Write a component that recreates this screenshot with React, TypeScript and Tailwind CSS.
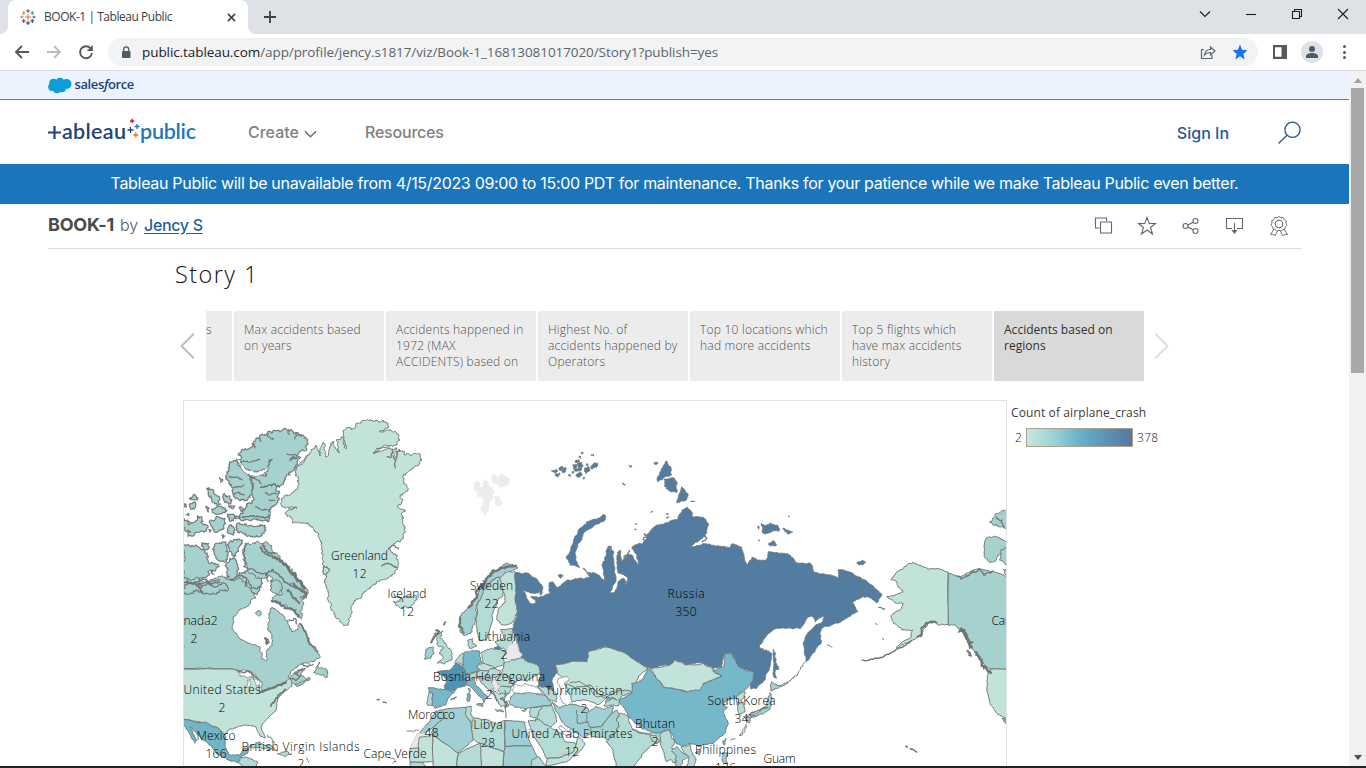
import React from "react";

type Tile = "P" | "A" | "B" | "C" | "D" | "E" | "F" | "G";
// [fill, tile, coast roughness, points]
type Region = [string, Tile, number, string];
type Pt = [number, number];

// Survey sheets: each has its own origin and a three-to-one scale; P is plain map space.
const tiles: Record<Tile, [number, number, number]> = {
  P: [0, 0, 1],
  A: [180, 400, 3],
  B: [180, 580, 3],
  C: [380, 440, 3],
  D: [380, 590, 3],
  E: [540, 440, 3],
  F: [570, 600, 3],
  G: [730, 500, 3],
};

const MINT = "#c1e3da";
const PALE = "#b3dcd6";
const CANADA = "#a5d1ce";
const AQUA = "#a0d0d3";
const SKY = "#74b8c9";
const RUSSIA = "#527da0";
const GRAY = "#e9e9e9";

function noise(a: Pt, b: Pt) {
  const v = Math.sin((a[0] + b[0]) * 12.9898 + (a[1] + b[1]) * 78.233) * 43758.5453;
  return (v - Math.floor(v)) * 2 - 1;
}

function split(a: Pt, b: Pt, amp: number, depth: number, out: Pt[]) {
  const dx = b[0] - a[0];
  const dy = b[1] - a[1];
  const len = Math.hypot(dx, dy);
  if (depth === 0 || len < 1.6 || amp === 0) {
    out.push(b);
    return;
  }
  const sign = a[0] < b[0] || (a[0] === b[0] && a[1] < b[1]) ? 1 : -1;
  const k = noise(a, b) * Math.min(amp, len * 0.5) * sign;
  const m: Pt = [(a[0] + b[0]) / 2 - (dy / len) * k, (a[1] + b[1]) / 2 + (dx / len) * k];
  split(a, m, amp * 0.85, depth - 1, out);
  split(m, b, amp * 0.85, depth - 1, out);
}

function toPath(tile: Tile, amp: number, src: string, closed = true) {
  const [ox, oy, s] = tiles[tile];
  const pts = src.split(" ").map((p) => {
    const [x, y] = p.split(",").map(Number);
    return [ox + x / s, oy + y / s] as Pt;
  });
  const depth = amp > 1 ? 4 : 3;
  const out: Pt[] = [pts[0]];
  for (let i = 1; i < pts.length; i++) split(pts[i - 1], pts[i], amp, depth, out);
  if (closed) split(pts[pts.length - 1], pts[0], amp, depth, out);
  return "M" + out.map((p) => p[0].toFixed(1) + " " + p[1].toFixed(1)).join("L") + (closed ? "Z" : "");
}

const regions: Region[] = [
  // Greenland
  [MINT, "P", 1.5, "308,455 313,449 317,446 320,456 322,445 324,443 326,457 330,448 333,441 339,453 336,440 341,437 346,449 343,432 350,428 356,427 361,422 370,420 378,421 386,422 389,427 379,431 389,430 396,432 400,440 393,446 380,448 374,454 384,450 397,448 394,460 399,449 405,455 412,455 415,453 420,455 422,460 410,470 403,475 404,482 408,490 400,495 402,503 398,507 405,510 402,515 403,522 405,528 403,537 397,542 390,550 397,555 398,568 395,573 388,578 383,580 373,585 362,597 353,603 352,613 348,625 342,623 335,617 330,607 328,597 326,587 325,580 327,577 323,567 322,550 318,533 308,523 293,523 285,513 297,508 283,507 282,498 290,495 298,488 298,478 295,475 297,467 305,460"],
  [MINT, "A", 1, "430,503 440,500 448,512 438,524 430,518"],
  // Arctic Canada
  [CANADA, "A", 2.4, "175,165 190,150 220,130 250,105 280,92 320,90 350,98 375,115 385,130 380,150 330,182 362,172 345,200 330,225 305,255 290,262 295,285 290,310 265,330 270,355 250,362 200,358 165,352 190,340 200,320 210,308 218,290 216,268 212,246 205,230 225,228 245,226 265,208 240,218 215,220 190,208"],
  [CANADA, "A", 2, "160,182 172,182 190,210 205,226 214,245 216,275 198,302 180,302 160,285 155,262 142,240 145,210 150,185"],
  [CANADA, "A", 1, "118,233 128,238 122,248"],
  [CANADA, "A", 1.7, "80,265 100,270 118,290 122,313 110,312 95,298 85,285"],
  [CANADA, "A", 1.4, "130,282 145,288 155,305 146,313 135,308"],
  [CANADA, "A", 1.2, "28,296 44,284 54,296 40,299"],
  [CANADA, "A", 1.2, "28,312 46,306 47,322 36,328"],
  [CANADA, "A", 1, "12,310 18,312 16,322 12,320"],
  [CANADA, "A", 1, "18,345 26,340 28,346"],
  [CANADA, "A", 1, "78,318 87,326 85,336"],
  [CANADA, "A", 1, "145,318 165,318 160,326"],
  [CANADA, "A", 1, "178,322 190,325 184,335"],
  [CANADA, "A", 1.4, "95,327 115,318 140,330 126,342 100,338"],
  [CANADA, "A", 2, "12,355 24,372 45,365 52,348 65,350 64,368 80,375 75,395 48,398 40,408 22,408 32,395 12,388"],
  [CANADA, "A", 1.8, "92,360 115,350 135,355 132,385 112,397 98,385"],
  [CANADA, "A", 1.4, "142,342 163,345 160,362 148,360"],
  [CANADA, "A", 1.4, "147,375 160,380 160,405 146,400"],
  [CANADA, "A", 1.8, "172,370 200,378 255,375 258,392 240,410 200,408 178,398"],
  [CANADA, "A", 1, "86,388 94,390 88,396"],
  [CANADA, "A", 1, "125,405 135,408 128,416"],
  [CANADA, "A", 1.8, "110,430 138,425 138,455 142,478 118,482 102,455"],
  [CANADA, "A", 1.5, "150,425 187,420 175,450 163,472 150,455"],
  [CANADA, "A", 1.4, "65,430 86,430 85,446 70,448"],
  [CANADA, "A", 2, "12,435 55,440 76,455 84,480 105,490 117,500 95,510 102,522 85,518 70,532 40,540 12,530"],
  [CANADA, "A", 2, "150,474 162,476 172,500 170,522 188,518 212,512 235,520 245,545 235,575 200,568 150,572 140,550 148,530 140,505"],
  [CANADA, "A", 1.5, "278,540 292,545 288,562 275,560"],
  [CANADA, "P", 2.2, "245,543 255,544 263,543 272,546 273,552 280,558 287,565 293,572 300,582 308,590 307,598 300,597 302,607 302,618 292,610 285,605 275,602 272,598 282,595 281,585 272,577 262,578 255,575 248,570 243,560 242,550"],
  // Canada, mainland
  [CANADA, "P", 1.1, "183,578 190,580 197,577 205,583 215,578 225,577 232,581 239,577 244,582 250,588 256,598 251,600 250,604 240,610 233,618 232,628 238,637 248,643 260,647 262,658 267,660 267,650 272,645 272,635 268,630 269,613 272,607 280,613 288,622 292,632 297,630 300,623 307,635 308,642 318,652 320,658 313,662 303,663 295,668 288,677 295,672 305,668 300,675 308,679 297,685 292,683 287,682 280,687 270,690 260,694 262,682 255,675 240,671 232,669 183,669"],
  [CANADA, "A", 2, "12,555 35,548 50,560 80,552 105,560 125,548 145,570 110,578 60,576 12,580"],
  [CANADA, "B", 1.4, "400,278 408,262 420,248 415,264 440,268 443,290 425,286"],
  [CANADA, "B", 1.2, "345,312 365,305 385,292 392,297 372,310 352,320"],
  [CANADA, "B", 1.6, "270,5 295,0 305,25 290,45 275,35"],
  [CANADA, "B", 1, "228,97 240,93 243,103 233,106"],
  // United States, Mexico, Caribbean
  [MINT, "P", 0.5, "183,669 232,669 245,672 258,682 260,693 272,688 285,683 290,678 292,686 285,691 278,698 276,710 268,718 262,725 261,728 265,738 260,736 256,727 245,725 235,728 228,730 225,735 218,728 208,725 195,721 183,719"],
  ["#71b5c7", "B", 0.7, "12,418 60,428 75,425 95,440 115,445 138,470 135,500 150,525 180,525 190,505 205,503 203,520 180,535 175,548 150,542 110,522 85,490 70,480 45,455 30,440 50,482 45,490 25,455 12,435"],
  [PALE, "B", 0.8, "175,545 185,530 210,535 232,545 232,562 190,562"],
  [PALE, "B", 1, "205,498 235,486 265,495 292,512 260,505 225,503"],
  [PALE, "B", 1, "292,520 318,513 335,522 318,528"],
  // Iceland, British Isles
  [MINT, "D", 1.4, "40,35 60,30 70,20 105,15 110,30 90,50 68,54 50,47"],
  [PALE, "D", 1.2, "165,128 188,124 182,145 200,165 215,188 212,212 192,222 172,220 188,205 180,185 190,172 172,165"],
  [AQUA, "D", 1, "138,178 158,170 162,188 152,205 134,208"],
  // Scandinavia
  [AQUA, "P", 1.2, "460,617 470,605 480,590 487,577 497,570 507,563 518,568 508,573 505,578 498,577 490,583 483,595 477,605 475,620 471,633 463,635 459,627"],
  [PALE, "P", 0.8, "490,583 498,577 503,585 503,595 498,600 493,612 492,622 486,640 479,640 476,625 477,605 483,593"],
  [MINT, "P", 0.8, "505,572 515,572 517,590 519,610 512,623 502,625 497,620 498,610 505,602 503,590 500,578"],
  // Russia
  [RUSSIA, "P", 0.9, "515,573 527,573 535,578 542,585 540,592 532,593 523,590 528,600 533,605 537,603 531,596 540,597 550,594 549,583 553,582 557,588 567,580 580,578 590,577 583,568 587,572 595,573 605,582 602,565 605,557 608,548 614,552 614,563 616,580 610,592 615,592 618,582 624,578 626,585 627,577 618,573 617,557 620,550 622,562 627,555 632,555 638,565 637,555 632,547 643,543 647,535 653,528 665,523 678,519 682,510 687,507 692,512 693,517 703,517 708,523 707,532 700,540 690,548 700,545 710,544 722,547 730,548 732,544 742,547 744,557 747,565 752,557 757,560 767,560 768,552 780,553 790,555 797,563 810,563 814,572 830,575 838,578 838,570 850,572 860,577 872,585 882,595 877,603 870,598 862,597 853,602 858,612 847,618 837,623 823,627 820,633 821,643 815,650 810,658 806,662 804,647 805,637 813,628 822,622 824,615 815,622 813,617 807,618 801,628 790,628 775,629 763,640 758,647 763,650 772,653 770,667 765,680 757,688 751,689 750,683 755,672 738,667 733,655 725,653 722,667 713,668 703,663 687,665 675,660 670,665 650,668 637,662 623,652 607,647 588,652 587,662 570,662 555,665 557,673 552,680 553,697 547,693 538,687 540,675 537,668 522,658 518,645 512,630 517,617 515,600"],
  [RUSSIA, "E", 0.8, "190,222 198,230 195,240 160,258 135,275 115,310 105,340 110,365 120,382 90,376 78,352 90,335 100,300 115,270 140,245 170,238"],
  [RUSSIA, "E", 0.9, "378,63 393,85 395,105 370,115 352,125 352,112 360,95"],
  [RUSSIA, "E", 0.9, "372,117 400,113 410,125 410,158 388,152 372,137"],
  [RUSSIA, "E", 0.8, "425,140 445,165 440,180 410,188"],
  [RUSSIA, "E", 0.6, "342,68 352,66 352,72 345,73"],
  [RUSSIA, "E", 0.6, "266,77 276,77 272,83"],
  [RUSSIA, "E", 0.6, "246,130 256,134 252,136"],
  [RUSSIA, "E", 0.8, "34,92 50,88 52,96 40,96"],
  [RUSSIA, "E", 0.8, "56,84 66,78 70,86 60,92"],
  [RUSSIA, "E", 0.8, "46,102 58,98 54,111 48,108"],
  [RUSSIA, "E", 0.8, "64,92 76,82 77,94 68,99"],
  [RUSSIA, "E", 0.8, "98,76 108,72 110,84 100,86"],
  [RUSSIA, "E", 0.8, "106,62 116,58 118,66 108,68"],
  [RUSSIA, "E", 0.8, "116,50 123,50 122,56"],
  [RUSSIA, "E", 0.8, "112,70 126,68 128,80 114,82"],
  [RUSSIA, "E", 0.8, "96,96 101,94 100,100"],
  [RUSSIA, "E", 0.8, "102,86 124,84 122,92 106,94"],
  [RUSSIA, "E", 0.8, "108,104 122,96 126,106 114,112"],
  [RUSSIA, "E", 0.8, "132,86 146,80 150,92 138,101"],
  [RUSSIA, "E", 0.6, "138,73 145,73 142,79"],
  [RUSSIA, "E", 0.6, "129,113 135,114 131,118"],
  [RUSSIA, "E", 0.8, "152,84 165,68 173,70 170,82 158,86"],
  [RUSSIA, "E", 0.6, "84,104 92,104 90,110"],
  [RUSSIA, "E", 0.6, "122,38 130,38 128,42"],
  [RUSSIA, "E", 0.6, "152,44 162,44 160,48"],
  [RUSSIA, "E", 0.6, "54,408 62,402 70,408 62,415"],
  [RUSSIA, "E", 0.8, "0,432 8,440 6,460 0,465"],
  [RUSSIA, "E", 0.7, "204,318 214,318 214,326 206,326"],
  [RUSSIA, "G", 1, "95,70 105,78 120,68 145,78 148,92 120,98 105,103 97,92"],
  [RUSSIA, "G", 0.8, "158,85 172,90 188,95 172,102 164,94"],
  [RUSSIA, "G", 0.8, "115,132 128,122 140,136 122,138"],
  [RUSSIA, "G", 0.8, "84,78 88,80 86,88"],
  [RUSSIA, "G", 0.8, "380,188 398,180 406,187 400,193 384,193"],
  [RUSSIA, "G", 0.7, "130,448 136,458 138,488 146,508 136,510 135,525 140,535 131,530 132,490"],
  // Europe
  [PALE, "D", 0.8, "362,118 395,115 398,135 405,150 395,165 380,180 355,168 345,155 370,145"],
  [RUSSIA, "D", 0.4, "343,172 356,168 364,179 345,180"],
  [GRAY, "D", 0.8, "385,165 410,160 415,182 427,192 415,208 378,208 378,190"],
  [PALE, "D", 0.8, "302,190 335,175 365,180 378,188 370,205 372,222 345,235 310,220"],
  [SKY, "D", 0.8, "250,190 275,182 300,185 305,220 290,228 298,245 255,250 248,225"],
  [PALE, "D", 0.8, "262,152 278,145 280,162 290,168 268,175"],
  [PALE, "D", 0.8, "232,205 250,190 250,225 235,218 225,222"],
  ["#4e94b5", "D", 0.8, "172,245 210,240 230,220 255,240 262,260 255,288 235,292 222,302 195,298 200,270"],
  [SKY, "D", 0.7, "145,293 195,298 225,305 205,325 195,345 165,355 156,345 158,310 148,305"],
  [PALE, "D", 0.6, "147,306 158,310 155,347 142,345"],
  [SKY, "D", 0.7, "258,272 285,265 285,282 312,312 322,318 312,338 302,320 275,292 260,285"],
  [SKY, "D", 0.6, "290,342 310,340 307,350"],
  [SKY, "D", 0.6, "262,312 271,312 269,333 261,332"],
  [PALE, "D", 0.6, "264,296 270,296 268,308"],
  [MINT, "D", 0.8, "290,228 310,220 330,226 345,235 325,242 300,242"],
  [PALE, "D", 0.8, "262,258 300,242 325,242 320,256 290,264 268,268"],
  [PALE, "D", 0.8, "325,242 345,235 362,242 350,262 330,265 318,256"],
  [PALE, "D", 0.8, "372,218 400,210 430,205 452,218 478,230 478,252 440,275 415,265 400,285 388,262 362,252"],
  [PALE, "D", 0.8, "350,258 375,252 400,285 393,292 360,290 342,272"],
  [PALE, "D", 0.7, "360,290 393,292 388,310 362,312 355,300"],
  [PALE, "D", 0.8, "295,265 330,265 338,282 340,305 325,298 305,280"],
  [GRAY, "D", 0.7, "335,268 345,270 360,288 350,302 340,292"],
  [MINT, "D", 1, "338,305 362,312 385,312 368,322 375,335 388,345 368,348 355,340"],
  [PALE, "D", 0.7, "345,358 362,360 372,365 355,364"],
  [AQUA, "D", 0.8, "390,322 412,310 450,308 500,318 515,345 470,350 440,356 405,352 388,340"],
  [PALE, "D", 0.6, "425,362 440,357 435,364"],
  [PALE, "D", 0.8, "470,288 500,292 530,312 530,335 510,330 495,315"],
  // Asia
  [MINT, "P", 0.7, "555,665 570,662 587,662 588,652 607,647 623,652 637,662 648,668 640,675 633,685 632,692 620,690 607,697 600,695 590,685 575,688 562,683 565,678 557,673"],
  [MINT, "P", 0.7, "566,684 575,688 590,685 600,695 607,697 598,705 585,700 572,702 570,695"],
  [PALE, "P", 0.7, "607,697 620,690 632,692 622,696 618,706 604,706"],
  [AQUA, "P", 0.7, "552,702 560,708 572,704 588,708 590,722 592,733 585,738 572,730 562,722"],
  [AQUA, "F", 0.8, "50,340 75,322 100,328 130,320 120,345 95,378 60,382 50,365"],
  [CANADA, "F", 0.8, "60,382 95,378 120,345 140,330 150,342 140,360 148,380 135,400 130,415 110,420 95,410 65,410"],
  [PALE, "F", 0.8, "150,340 170,345 180,372 190,388 235,402 270,395 280,405 272,425 255,430 215,465 190,502 140,502 130,450 108,425 135,400 148,380 140,360"],
  [PALE, "F", 0.7, "240,405 258,405 268,422 262,430 246,425"],
  [SKY, "F", 0.8, "145,300 185,280 185,250 215,240 235,205 260,235 280,260 350,275 400,250 455,228 430,210 460,200 462,165 485,160 505,200 530,215 555,215 550,240 530,265 500,290 472,300 458,318 472,322 460,335 475,370 465,400 430,430 385,440 360,430 335,440 315,425 300,390 260,400 215,385 175,350 160,320"],
  [MINT, "F", 0.7, "240,205 300,195 315,180 350,195 400,190 430,205 430,215 455,228 400,250 390,270 350,275 280,260 260,235"],
  [PALE, "F", 0.9, "272,400 300,390 305,415 315,425 305,445 322,460 315,490 300,478 290,485 280,455 272,435"],
  [AQUA, "F", 0.8, "305,452 320,440 345,462 358,470 340,478 330,502 318,502 320,470"],
  [PALE, "F", 0.8, "335,440 360,432 362,450 378,480 372,502 350,502 358,472 345,462"],
  [SKY, "F", 0.6, "376,458 392,450 388,466"],
  [MINT, "F", 0.7, "500,290 525,275 522,292 512,300 520,308 502,308"],
  [PALE, "F", 0.7, "502,308 520,308 525,335 508,342 503,322"],
  [AQUA, "F", 0.8, "605,245 632,258 615,268 602,272"],
  [AQUA, "F", 0.9, "600,278 606,300 598,330 575,342 545,352 540,344 568,335 592,315"],
  [AQUA, "F", 0.8, "528,352 545,350 538,368 530,362"],
  [SKY, "F", 0.6, "458,425 468,415 463,436"],
  [AQUA, "F", 1, "456,460 472,460 468,482 474,492 458,486"],
  // Middle East, Africa
  [PALE, "D", 0.8, "452,352 515,347 530,395 510,412 478,390 450,380"],
  [PALE, "D", 0.7, "445,392 475,388 510,412 545,430 555,455 590,460 580,485 540,502 500,505 482,470 455,425"],
  [MINT, "D", 0.7, "595,440 615,460 598,485 560,515 500,528 500,505 540,502 580,485"],
  [AQUA, "D", 0.5, "375,392 435,396 438,418 455,469 375,469"],
  [PALE, "D", 0.6, "275,385 320,388 350,402 375,392 375,469 372,485 300,460 275,445"],
  [AQUA, "D", 0.6, "165,365 195,358 260,352 262,385 272,395 280,450 235,490 155,430 165,408 195,380"],
  [AQUA, "D", 0.6, "120,428 150,395 165,365 190,366 195,380 165,408 130,430"],
  [GRAY, "D", 0.3, "112,430 140,430 137,440 118,442 115,475 90,475"],
  [MINT, "D", 0.4, "115,475 118,442 137,440 158,432 163,515 120,517 90,515 90,475"],
  [MINT, "D", 0.6, "158,432 235,490 232,535 160,535"],
  [PALE, "D", 0.6, "235,490 300,460 312,485 305,535 232,535"],
  [MINT, "D", 0.6, "300,460 372,485 368,535 305,535"],
  [AQUA, "D", 0.5, "375,469 455,469 472,500 455,535 368,535 372,485"],
  [PALE, "D", 0.7, "455,510 475,500 500,528 455,535"],
  [PALE, "D", 0.7, "258,352 275,350 272,372 282,385 272,397 260,380"],
  [PALE, "D", 0.8, "90,517 130,517 140,535 90,535"],
  // Far east side of the map
  [MINT, "G", 0.9, "483,240 510,210 530,195 548,187 565,195 600,207 640,210 655,218 655,375 625,375 605,362 590,380 570,405 540,425 500,445 500,440 545,410 548,390 515,390 490,370 485,345 515,325 520,310 500,310 470,290 510,280 520,275 505,262 500,245"],
  [CANADA, "G", 0.5, "655,218 690,232 720,215 745,205 790,215 835,232 835,508 780,508 750,480 730,450 700,400 675,375 655,375"],
  [MINT, "G", 0.4, "780,508 835,508 835,658 800,640 780,610 770,570 772,530"],
  [SKY, "G", 0.4, "816,654 835,660 835,680"],
  [CANADA, "G", 2, "780,68 800,40 835,22 835,95 815,80 800,72"],
  [CANADA, "G", 1, "768,115 790,110 820,120 835,130 805,165 800,180 780,188 762,170"],
  [CANADA, "G", 1.2, "835,140 812,155 808,180 835,200"],
  [CANADA, "G", 1, "835,204 820,208 823,220 835,225"],
];

// [tile, roughness, width, points] open strokes: fjords, island chains, inner borders
const strokes: [Tile, number, number, string][] = [
  ["A", 1.5, 1.2, "205,222 235,240 245,252"],
  ["A", 1.5, 1.3, "240,262 285,252 300,262"],
  ["A", 1.5, 1.2, "262,200 268,180 278,178"],
  ["A", 1.2, 1.1, "180,188 215,185 240,180"],
  ["A", 1.2, 1.1, "215,130 225,145"],
  ["A", 1.2, 1.1, "240,112 245,122"],
  ["A", 1.2, 1.1, "262,98 268,110 282,118"],
  ["A", 1.2, 1.1, "325,92 330,104"],
  ["A", 1.2, 1.1, "352,100 345,118"],
  ["A", 1.2, 1.1, "320,160 340,165 355,168"],
  ["A", 1.2, 1.1, "145,228 170,232 188,240"],
  ["A", 1.2, 1.1, "160,262 180,262 192,254"],
  ["A", 1.2, 1.1, "165,285 180,278 195,284"],
  ["A", 1.2, 1.1, "290,280 270,285 255,280"],
  ["A", 1.2, 1.1, "286,302 265,300"],
  ["A", 1.2, 1.1, "225,322 245,330 262,326"],
  ["A", 1.6, 1.6, "240,440 265,465 300,480 335,520 375,565"],
  ["A", 1.6, 1.6, "250,430 262,455 285,462"],
  ["A", 1.8, 2.2, "285,468 305,482 325,505 350,540 378,566"],
  ["A", 1.6, 1.4, "185,350 270,348"],
  ["A", 1.2, 1.2, "200,430 190,460 192,500 235,518 262,520 265,545"],
  ["A", 1.5, 1.4, "255,525 275,510 310,540 345,560"],
  ["A", 1.5, 1.4, "15,545 40,550 75,540 90,555 120,545"],
  ["A", 1.5, 1.4, "150,540 175,528 200,535 195,560"],
  ["A", 0.5, 1, "385,165 345,205"],
  ["A", 1, 1, "580,160 590,145 630,140"],
  ["A", 1, 1, "325,325 350,322"],
  ["B", 1.4, 1.2, "10,5 60,12 68,38 55,10 120,0"],
  ["B", 1.4, 1.2, "205,0 215,25 240,20"],
  ["B", 1.6, 2, "275,60 300,72 330,85 358,112"],
  ["B", 1.6, 2.2, "340,8 362,35 380,42 372,58"],
  ["B", 1.4, 1.8, "320,30 345,55 358,72"],
  ["B", 1.4, 1.2, "325,120 345,115 352,132"],
  ["B", 1, 1.6, "360,130 380,165 388,188 415,215"],
  ["B", 1.2, 2.4, "256,172 262,180 260,190 268,185"],
  ["B", 1.3, 1.4, "172,275 205,272 235,300"],
  ["B", 1, 2.2, "242,335 275,325 300,315 320,308"],
  ["B", 1.2, 1.4, "330,295 345,300 360,290 345,280 370,265"],
  ["B", 1.2, 1.2, "365,250 385,262 400,252"],
  ["B", 1.2, 1.6, "270,380 285,362 295,345 318,328"],
  ["B", 1, 1, "262,465 275,475 285,490"],
  ["B", 0.6, 1, "380,532 386,548"],
  ["B", 0.6, 1.2, "590,358 600,360"],
  ["B", 0.6, 1.2, "608,366 620,370"],
  ["C", 1.6, 2.4, "268,505 298,445 330,408 360,385 410,380"],
  ["C", 1, 1.2, "20,50 35,50 38,30"],
  ["C", 1, 1.2, "45,85 52,40 60,30"],
  ["C", 1, 1.2, "5,380 25,370 45,382 52,382"],
  ["C", 1, 1.2, "25,330 42,315 55,328"],
  ["C", 1.2, 1.2, "40,462 58,470 66,485"],
  ["D", 1.2, 1.8, "240,80 238,110 252,130"],
  ["D", 1.5, 2, "155,160 162,140 175,128 168,118"],
  ["D", 1, 1.6, "190,105 198,95"],
  ["D", 1.2, 1.2, "330,300 345,320 352,335"],
  ["D", 1.5, 1.4, "360,325 380,335 375,355"],
  ["D", 1, 1.2, "212,330 230,322"],
  ["D", 1, 1, "80,422 95,424 118,420"],
  ["D", 0.8, 1, "8,335 18,338"],
  ["D", 0.8, 1, "26,500 38,505 48,515 38,520"],
  ["D", 1, 1, "375,300 378,385"],
  ["D", 0.6, 1, "465,395 480,360 490,350"],
  ["D", 0.6, 1, "590,360 592,400 625,395"],
  ["E", 1.2, 1.2, "392,125 400,132 395,118"],
  ["E", 1.2, 1.2, "308,300 320,285 312,280"],
  ["E", 1, 1.2, "285,252 292,252"],
  ["E", 1, 1.2, "333,218 338,213"],
  ["E", 1, 1.2, "378,222 385,225"],
  ["E", 1, 1.2, "378,232 388,230"],
  ["E", 1, 1.2, "284,266 289,268"],
  ["E", 1, 1.2, "452,182 464,184"],
  ["E", 1, 1.2, "492,290 500,296 485,306"],
  ["E", 1, 1.2, "268,330 258,345 252,350 262,372"],
  ["F", 1, 1, "0,250 30,245 60,265 80,290 120,300"],
  ["F", 0.8, 1, "185,388 215,400 240,402"],
  ["F", 0.8, 1, "105,305 130,295 140,300 110,290"],
  ["F", 1, 1, "510,408 520,398 530,378"],
  ["F", 1, 1, "632,262 655,245"],
  ["F", 0.8, 1.4, "565,142 572,150 580,145"],
  ["F", 1, 1, "520,350 560,348"],
  ["G", 1, 1, "150,558 175,545 195,528 212,505 226,488"],
  ["G", 1, 1.4, "395,480 440,475 480,460 520,440 545,420"],
  ["G", 1.6, 2, "560,410 575,400 582,378 600,365 620,370"],
  ["G", 2, 3, "690,385 705,400 715,425 728,440"],
  ["G", 1.4, 2, "712,450 722,470"],
  ["G", 1.6, 2.4, "735,455 755,490 780,515 782,522"],
  ["G", 0.5, 1, "390,232 390,290"],
  ["G", 0.8, 1.2, "445,322 465,328"],
  ["G", 0.8, 1, "292,436 306,443"],
  ["G", 0.8, 1, "435,370 442,374"],
  ["G", 0.8, 1, "456,413 461,420"],
  ["G", 0.8, 1.2, "525,739 534,742"],
  ["G", 0.8, 1.4, "540,745 552,750 560,758"],
  ["G", 0.6, 1, "174,49 180,49"],
  ["G", 0.6, 1.2, "84,120 90,122"],
  ["G", 1.5, 1.2, "800,50 815,60 822,85"],
  ["G", 1.4, 1.3, "680,228 692,236 720,222 745,208 765,225 790,212"],
  ["G", 0.8, 1, "28,708 38,695 50,672"],
  ["G", 0.8, 1, "2,722 16,716"],
  ["G", 1, 1.4, "55,645 90,632 115,622"],
];

// Water inside the land: lakes and enclosed seas
const water: [Tile, number, string][] = [
  ["A", 0.9, "168,176 180,178 186,194 202,210 225,217 248,210 268,202 252,222 225,230 202,226 184,208"],
  ["B", 1, "178,278 190,270 212,275 222,288 205,292 195,288 180,290"],
  ["B", 1, "202,300 212,298 208,325 204,322"],
  ["B", 1, "218,295 238,300 240,318 228,316"],
  ["D", 0.6, "535,265 560,258 568,268 552,282 570,310 575,335 562,348 545,335 540,315 545,300 533,280"],
  ["D", 0.6, "578,417 560,425 542,405 538,415 550,432 575,440"],
  ["D", 0.4, "396,300 405,282 425,290 435,280 465,290 480,300 488,312 450,308 405,310"],
];

// [text, centre x, baseline, width]
const labels: [string, number, number, number][] = [
  ["Greenland", 359.5, 560, 57],
  ["12", 359.5, 578, 14],
  ["Iceland", 407, 598, 39],
  ["12", 407, 616, 14],
  ["Sweden", 491.5, 590, 43],
  ["22", 491.5, 608, 14],
  ["Lithuania", 504, 641, 52],
  ["2", 504, 659, 7],
  ["Bosnia-Herzegovina", 489, 681, 112],
  ["2", 489, 699, 7],
  ["Turkmenistan", 584, 695, 77],
  ["2", 584, 713, 7],
  ["Morocco", 431.5, 719, 47],
  ["48", 431.5, 737, 14],
  ["Libya", 488, 729, 29],
  ["28", 488, 747, 14],
  ["United Arab Emirates", 572, 738, 121],
  ["12", 572, 756, 14],
  ["Bhutan", 655, 728, 40],
  ["2", 655, 746, 7],
  ["Russia", 686, 598, 37],
  ["350", 686, 616, 21],
  ["South Korea", 741.5, 705, 68],
  ["34", 741.5, 723, 14],
  ["Philippines", 725.5, 754, 61],
  ["126", 725.5, 772, 21],
  ["Guam", 779.5, 763, 32],
  ["United States", 222, 694, 77],
  ["2", 222, 712, 7],
  ["Mexico", 216, 740, 39],
  ["166", 216, 758, 21],
  ["British Virgin Islands", 300.5, 751, 118],
  ["2", 301, 768, 7],
  ["Cape Verde", 395, 758, 63],
  ["2", 194, 643, 7],
  ["Canada2", 193.5, 625, 48],
  ["Canada2", 1015, 625, 47],
];

function WorldMap() {
  return (
    <svg viewBox="184 401 822 365" className="block h-[365px] w-[822px]" fontFamily="'Open Sans', 'Noto Sans', sans-serif">
      <path
        fill="#ececec"
        d={
          toPath("C", 1.2, "278,130 288,124 296,126 300,142 310,138 312,122 322,118 328,135 345,155 340,170 352,165 368,190 360,205 350,198 342,172 330,180 325,210 318,228 305,215 302,200 310,185 300,172 290,175 292,155 282,148") +
          toPath("C", 1, "332,115 338,102 348,106 352,112 362,102 372,106 390,118 388,130 368,143 350,132 338,128")
        }
      />
      {regions.map(([fill, tile, amp, pts], i) => (
        <path
          key={i}
          d={toPath(tile, amp, pts)}
          fill={fill}
          stroke={fill === GRAY ? "#c9cfcd" : "#737978"}
          strokeWidth={fill === RUSSIA ? 0.8 : tile === "A" ? 1.15 : 1}
          strokeLinejoin="round"
        />
      ))}
      {water.map(([tile, amp, pts], i) => (
        <path key={i} d={toPath(tile, amp, pts)} fill="#fff" stroke="#868b8a" strokeWidth={0.9} />
      ))}
      {strokes.map(([tile, amp, w, pts], i) => (
        <path key={i} d={toPath(tile, amp, pts, false)} fill="none" stroke="#6f7675" strokeWidth={w} />
      ))}
      <g fill="#000" fontSize="12" textAnchor="middle">
        {labels.map(([t, x, y, w], i) => (
          <text key={i} x={x} y={y} textLength={w} className="font-light">
            {t}
          </text>
        ))}
      </g>
    </svg>
  );
}

const favCrosses: [number, number, number, string][] = [
  [8, 8, 3, "#e8762d"],
  [8, 2, 2, "#5b6591"],
  [8, 14, 2, "#1f447e"],
  [2, 8, 1.6, "#7199a6"],
  [14, 8, 1.6, "#5b6591"],
  [3.7, 4, 2, "#eb912c"],
  [12.3, 4, 2, "#5c8aa8"],
  [3.7, 12, 2, "#c72035"],
  [12.3, 12, 2, "#1f447e"],
];

function Favicon() {
  return (
    <svg viewBox="0 0 16 16" className="size-4 shrink-0">
      {favCrosses.map(([x, y, r, c], i) => (
        <path key={i} d={`M${x - r} ${y}h${r * 2}M${x} ${y - r}v${r * 2}`} stroke={c} strokeWidth="1.1" />
      ))}
    </svg>
  );
}

function TabStrip() {
  return (
    <div className="flex h-[34px] items-stretch bg-[#dee1e6]">
      <div className="w-2 bg-white">
        <div className="h-full rounded-br-lg bg-[#dee1e6]" />
      </div>
      <div className="flex w-60 items-center rounded-t-lg bg-white pl-3 pr-[12px] font-['Open_Sans','Noto_Sans',sans-serif] text-[12px] text-[#3c4043]">
        <Favicon />
        <span className="ml-2 flex-1 tracking-[-0.46px]">BOOK-1 | Tableau Public</span>
        <svg viewBox="0 0 10 10" className="size-[9px]">
          <path d="M1 1l8 8M9 1L1 9" stroke="#3c4043" strokeWidth="1.7" />
        </svg>
      </div>
      <div className="w-2 bg-white">
        <div className="h-full rounded-bl-lg bg-[#dee1e6]" />
      </div>
      <svg viewBox="0 0 12 12" className="ml-2 mt-[11px] size-3">
        <path d="M6 0v12M0 6h12" stroke="#3c4043" strokeWidth="1.8" />
      </svg>
      <div className="ml-auto flex items-start pr-[17px] pt-2">
        <svg viewBox="0 0 150 12" className="h-3 w-[150px]" fill="none" stroke="#1b1c1d" strokeWidth="1.1">
          <path d="M1 3.5l5 5 5-5" />
          <path d="M47 6.5h10" />
          <path d="M93.5 3.5h7v7h-7zM95.5 3V1.5h7v7H101" />
          <path d="M139 1l10 10M149 1l-10 10" />
        </svg>
      </div>
    </div>
  );
}

function Toolbar() {
  return (
    <div className="flex h-[37px] items-center border-b border-[#dadce0] bg-white pl-[14px] pr-5">
      <svg viewBox="0 0 80 16" className="h-4 w-20" fill="none" strokeWidth="1.9">
        <path d="M15 8H2M8 2L2 8l6 6" stroke="#55595e" />
        <path d="M33 8h13M40 2l6 6-6 6" stroke="#babcbe" />
        <path d="M76.5 4.2A6 6 0 1 0 78 9" stroke="#55595e" />
        <path d="M78.800 1v6h-6z" fill="#55595e" />
      </svg>
      <div className="ml-[14px] flex h-7 w-[1150px] items-center rounded-full bg-[#f1f3f4] pl-[13px] pr-[9px]">
        <svg viewBox="0 0 10 13" className="h-[13px] w-[10px]">
          <rect x="1" y="5" width="8.500" height="7" rx="1" fill="#55595e" />
          <path d="M2.700 5V3.400a2.500 2.500 0 0 1 5 0V5" fill="none" stroke="#55595e" strokeWidth="1.300" />
        </svg>
        <span className="ml-[11px] flex-1 whitespace-nowrap pt-px font-['Open_Sans','Noto_Sans',sans-serif] text-[13.500px] tracking-[-0.080px] text-[#5f6368]">
          <span className="text-[#202124]">public.tableau.com</span>/app/profile/jency.s1817/viz/Book-1_16813081017020/Story1?publish=yes
        </span>
        <svg viewBox="0 0 16 16" className="size-4" fill="none" stroke="#5f6368" strokeWidth="1.200">
          <path d="M4 5.500H1.500v9H12V11" />
          <path d="M4.500 11c.5-4 3-5.500 6-5.500V3l4.500 4-4.500 4V8.500C8 8.500 6 9 4.500 11z" />
        </svg>
        <svg viewBox="0 0 24 24" className="ml-[15px] size-[18px]">
          <path fill="#1a73e8" d="M12 17.800 18.200 22l-1.700-7.300L22 9.700l-7.200-.6L12 2 9.200 9.100 2 9.700l5.500 5L5.800 22z" />
        </svg>
      </div>
      <svg viewBox="0 0 14 14" className="ml-[15px] size-3.5">
        <path d="M0 0h14v14H0zM2 2.200v9.600h6.500V2.200z" fill="#55595e" fillRule="evenodd" />
      </svg>
      <div className="ml-[14px] flex size-[22px] items-center justify-center rounded-full bg-[#dee1e6]">
        <svg viewBox="0 0 12 12" className="size-3" fill="#4d5b73">
          <circle cx="6" cy="3" r="3" />
          <path d="M0 12V10c0-2 3-3 6-3s6 1 6 3v2z" />
        </svg>
      </div>
      <div className="ml-auto flex flex-col gap-[2.200px]">
        <i className="size-[3px] rounded-full bg-[#55595e]" />
        <i className="size-[3px] rounded-full bg-[#55595e]" />
        <i className="size-[3px] rounded-full bg-[#55595e]" />
      </div>
    </div>
  );
}

function SalesforceBar() {
  return (
    <div className="flex h-[29px] items-center border-b border-[#1b96d0] bg-[#ecf3fe] pl-12">
      <svg viewBox="0 0 24 17" className="mt-px h-[17px] w-6" fill="#0d9dda">
        <circle cx="5.500" cy="6" r="4.300" />
        <circle cx="12" cy="4.800" r="4" />
        <circle cx="18.500" cy="7" r="5" />
        <circle cx="4.200" cy="10" r="4" />
        <circle cx="9" cy="12.300" r="4" />
        <circle cx="14" cy="11.500" r="3.800" />
        <path d="M5 5h12v8H5z" />
      </svg>
      <span className="ml-[2.500px] pb-px font-['Open_Sans',sans-serif] text-[13px] font-semibold leading-none tracking-[-0.380px] text-[#1c3f7d]">
        sales<i>f</i>orce
      </span>
    </div>
  );
}

function TableauLogo() {
  return (
    <svg viewBox="0 0 150 28" className="h-7 w-[150px]" fontFamily="Lato, sans-serif" fontSize="21.500">
      <path d="M0 14.500h13M6.500 8v13" stroke="#23437c" strokeWidth="2.200" />
      <text x="14" y="21" textLength="64" fill="#23437c" className="font-semibold">
        ableau
      </text>
      <text x="92" y="21" textLength="56" fill="#2277b8" className="font-semibold">
        public
      </text>
      <path d="M79.500 12h6M82.500 9v6" stroke="#23437c" strokeWidth="1.300" />
      <path d="M82 3h4.400M84.200.8v4.400" stroke="#c72035" strokeWidth="1.400" />
      <path d="M86.500 8.500h5M89 6v5" stroke="#2277b8" strokeWidth="1.300" />
      <path d="M85.300 17h5M87.800 14.500v5" stroke="#e8762d" strokeWidth="1.400" />
    </svg>
  );
}

function SiteHeader() {
  return (
    <header className="flex h-16 items-center pl-12 pr-12 font-['Inter',sans-serif] text-[16px] font-medium">
      <TableauLogo />
      <span className="ml-[50px] text-[#7f7f7f]">Create</span>
      <svg viewBox="0 0 14 8" className="ml-[5px] mt-[3px] h-2 w-[13px]" fill="none" stroke="#6b6b6b" strokeWidth="1.600">
        <path d="M1 1l6 6 6-6" />
      </svg>
      <span className="ml-12 tracking-[-0.200px] text-[#7f7f7f]">Resources</span>
      <span className="ml-auto pt-0.5 text-[#2a5596]">Sign In</span>
      <svg viewBox="0 0 24 24" className="ml-12 mt-0.5 size-6" fill="none" stroke="#2a5596" strokeWidth="1.300">
        <circle cx="15.500" cy="8.800" r="7.600" />
        <path d="M10 14.300L1.500 22.500" />
      </svg>
    </header>
  );
}

function VizActions() {
  return (
    <svg viewBox="0 0 196 20" className="ml-auto mr-[11px] h-5 w-[196px]" fill="none" stroke="#666" strokeWidth="1.100">
      <path d="M5.500 11.500h-4v-10h11v3M6.500 5.500h11v11h-11z" transform="translate(0 .5)" />
      <path d="M53 1.500l2.200 6h6.300l-5 4 2 6.500-5.500-4-5.500 4 2-6.500-5-4h6.300z" />
      <circle cx="91.500" cy="10" r="2.500" />
      <circle cx="101.500" cy="5" r="2.500" />
      <circle cx="101.500" cy="15" r="2.500" />
      <path d="M94 9l5-2.800M94 11l5 2.800" />
      <path d="M138 12.500h-5.500v-10h16v10H143M140.500 7v9" />
      <path d="M137.500 14h6l-3 4z" fill="#666" stroke="none" />
      <circle cx="185" cy="8" r="3.700" />
      <path d="M185 .5l2 1.200 2.300-.2 1 2.100 2 1.200-.3 2.300.9 2.100-1.600 1.700-.4 2.300-2.300.5-1.800 1.500-1.800-.9-1.800.9-1.800-1.500-2.300-.5-.4-2.300-1.600-1.700.9-2.100-.3-2.300 2-1.200 1-2.100 2.300.2z" strokeWidth=".9" />
      <path d="M180 13l-3.500 5.500 2.800-.3 1.500 2 3-5.500M190 13l3.500 5.500-2.800-.3-1.500 2-3-5.500" strokeWidth=".9" />
    </svg>
  );
}

const captions = [
  "Max accidents based on years",
  "Accidents happened in 1972 (MAX\nACCIDENTS) based on",
  "Highest No. of accidents happened by Operators",
  "Top 10 locations which had more accidents",
  "Top 5 flights which have max accidents history",
  "Accidents based on regions",
];

function StoryPoints() {
  return (
    <div className="ml-[180px] flex h-[70px] items-center">
      <svg viewBox="0 0 14 26" className="h-[26px] w-[14px]" fill="none" stroke="#bcbcbc" strokeWidth="2">
        <path d="M14 .5L1.500 13 14 25.500" />
      </svg>
      <div className="ml-3 flex h-[70px] gap-0.5 whitespace-pre-line text-[12px] leading-4 tracking-[0.220px] text-[#505050]">
        <div className="w-[26px] bg-[#ececec] pt-[11px] font-light">s</div>
        {captions.map((c, i) => (
          <div
            key={c}
            className={
              i === captions.length - 1
                ? "w-[150px] bg-[#d9d9d9] pl-2.5 pr-2 pt-[11px] tracking-[0.020px] text-[#303030]"
                : "w-[150px] bg-[#ececec] pl-2.5 pr-2 pt-[11px] font-light"
            }
          >
            {c}
          </div>
        ))}
      </div>
      <svg viewBox="0 0 14 26" className="ml-[11px] h-[26px] w-[14px]" fill="none" stroke="#dedede" strokeWidth="2">
        <path d="M0 .5L12.500 13 0 25.500" />
      </svg>
    </div>
  );
}

function Legend() {
  return (
    <div className="ml-1 pt-1 text-[12px] leading-[17px] text-[#3c3c3c]">
      <div className="tracking-[0.110px]">Count of airplane_crash</div>
      <div className="mt-[7px] flex items-center pl-1 font-light tracking-[0.300px] text-[#1c1c1c]">
        <span className="w-[11px]">2</span>
        <div className="h-[19px] w-[107px] border border-[#aaa08c] bg-[linear-gradient(to_right,#c7e8dd,#9dd2d6_25%,#64b0c8_52%,#5b93b3_76%,#55789e)]" />
        <span className="ml-1">378</span>
      </div>
    </div>
  );
}

function Scrollbar() {
  return (
    <div className="flex h-[695px] w-[17px] flex-col items-center bg-[#f1f1f1] pt-[5px]">
      <svg viewBox="0 0 8 5" className="mt-0.5 h-[5px] w-2">
        <path d="M0 5l4-5 4 5z" fill="#a3a3a3" />
      </svg>
      <div className="mt-[5px] h-[285px] w-[13px] bg-[#a8a8a8]" />
      <svg viewBox="0 0 8 5" className="mb-1.5 mt-auto h-[5px] w-2">
        <path d="M0 0h8L4 5z" fill="#505050" />
      </svg>
    </div>
  );
}

export default function App() {
  return (
    <div className="flex h-[768px] w-[1366px] flex-col overflow-hidden bg-white font-['Open_Sans','Noto_Sans',sans-serif]">
      <TabStrip />
      <Toolbar />
      <div className="flex h-[695px]">
        <main className="h-[695px] w-[1349px] overflow-hidden">
          <SalesforceBar />
          <SiteHeader />
          <div className="flex h-10 items-center justify-center whitespace-nowrap bg-[#1b75bb] pb-0.5 font-['Inter',sans-serif] text-[16px] tracking-[-0.312px] text-white">
            Tableau Public will be unavailable from 4/15/2023 09:00 to 15:00 PDT for maintenance. Thanks for your patience while we make Tableau Public even better.
          </div>
          <div className="ml-12 flex h-[45px] w-[1253px] items-center whitespace-nowrap border-b border-[#dcdcdc] font-['Inter',sans-serif]">
            <span className="pb-[3px] text-[18px] font-bold tracking-[-0.250px] text-[#4b4b4b]">BOOK-1</span>
            <span className="ml-1.5 pb-0.5 text-[16px] font-light text-[#555]">by</span>
            <a className="ml-1.5 pb-0.5 text-[16px] font-medium tracking-[-0.350px] text-[#1f5fa0] underline underline-offset-2">Jency S</a>
            <VizActions />
          </div>
          <h1 className="ml-[175px] h-[62px] pt-2 text-[23.500px] font-light leading-[34px] tracking-[1.400px] text-[#111]">Story 1</h1>
          <StoryPoints />
          <div className="ml-[183px] mt-[19px] flex">
            <div className="h-[366px] w-[824px] border border-b-0 border-[#e2e2e2]">
              <WorldMap />
            </div>
            <Legend />
          </div>
        </main>
        <Scrollbar />
      </div>
      <div className="h-0.5 bg-[#202124]" />
    </div>
  );
}
